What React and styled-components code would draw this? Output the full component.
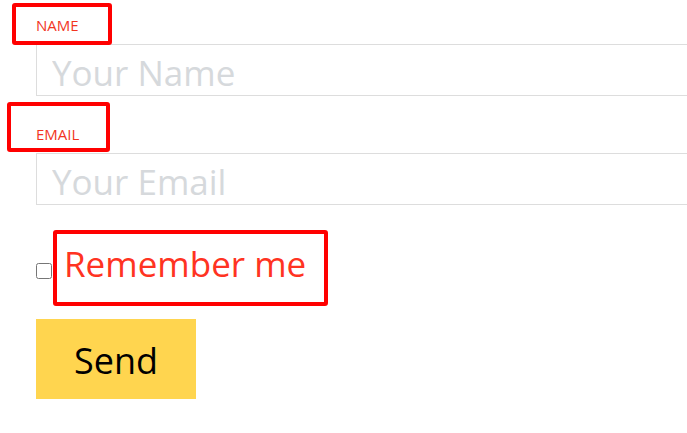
import React from 'react';
import styled, { createGlobalStyle } from 'styled-components';

const GlobalStyle = createGlobalStyle`
  html, body {
    margin: 0;
    padding: 0;
    overflow: hidden;
    background: #fff;
    font-family: "Open Sans", "Noto Sans", sans-serif;
  }
`;

const Form = styled.form`
  display: flex;
  flex-direction: column;
  align-items: flex-start;
  padding-left: 36px;
`;

const Field = styled.div`
  display: flex;
  flex-direction: column;
  width: 100%;
  & + & {
    margin-top: 13px;
  }
`;

// red highlight frames lie over the labels
const Label = styled.label`
  position: relative;
  display: flex;
  align-items: center;
  height: 44px;
  padding-top: 6px;
  box-sizing: border-box;
  font-size: 15px;
  color: #f2351f;
  text-transform: uppercase;

  &::after {
    content: '';
    position: absolute;
    left: ${p => p.$left}px;
    top: ${p => p.$top}px;
    width: ${p => p.$width}px;
    height: ${p => p.$height}px;
    box-sizing: border-box;
    border: 4px solid #ff0000;
    border-radius: 3px;
    pointer-events: none;
  }
`;

const Input = styled.input`
  width: calc(100% + 40px);
  height: 52px;
  box-sizing: border-box;
  margin: 0;
  padding: 4px 15px 0;
  border: 1px solid #dddddd;
  font-family: "Open Sans", "Noto Sans", sans-serif;
  font-size: 35px;
  color: #333;
  outline: none;

  &::placeholder {
    color: #d6d9dc;
  }
`;

const CheckRow = styled.div`
  display: flex;
  align-items: flex-start;
  margin-top: 25px;
`;

const Checkbox = styled.input`
  width: 16px;
  height: 16px;
  margin: 33px 1px 0 0;
`;

const RememberLabel = styled.label`
  position: relative;
  display: block;
  width: 275px;
  height: 76px;
  box-sizing: border-box;
  padding: 13px 0 0 11px;
  font-size: 35px;
  line-height: 42px;
  color: #ff3322;

  &::after {
    content: '';
    position: absolute;
    inset: 0;
    border: 4px solid #ff0000;
    border-radius: 3px;
    pointer-events: none;
  }
`;

const SendButton = styled.button`
  margin-top: 13px;
  width: 160px;
  height: 80px;
  padding: 2px 0 0;
  border: none;
  background: #ffd54f;
  color: #000;
  font-family: "Open Sans", "Noto Sans", sans-serif;
  font-size: 36px;
  cursor: pointer;
`;

export default function App() {
  return (
    <>
      <GlobalStyle />
      <Form onSubmit={e => e.preventDefault()}>
        <Field>
          <Label htmlFor="name" $left={-24} $top={3} $width={100} $height={42}>Name</Label>
          <Input id="name" type="text" placeholder="Your Name" />
        </Field>
        <Field>
          <Label htmlFor="email" $left={-29} $top={-7} $width={103} $height={50}>Email</Label>
          <Input id="email" type="email" placeholder="Your Email" />
        </Field>
        <CheckRow>
          <Checkbox id="remember" type="checkbox" />
          <RememberLabel htmlFor="remember">Remember me</RememberLabel>
        </CheckRow>
        <SendButton type="submit">Send</SendButton>
      </Form>
    </>
  );
}
